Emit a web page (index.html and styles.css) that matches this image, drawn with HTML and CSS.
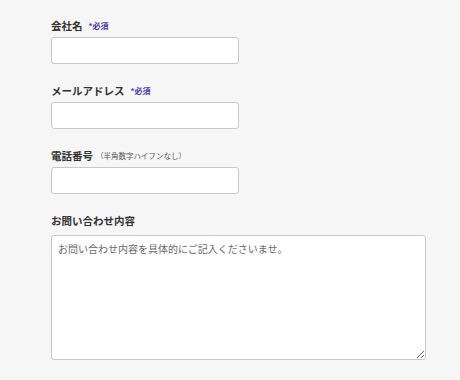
FILE: index.html
```html
<!DOCTYPE html>
<html lang="ja">
<head>
  <meta charset="UTF-8">
  <meta name="viewport" content="width=device-width, initial-scale=1.0">
  <title>お問い合わせ</title>
  <link rel="stylesheet" href="styles.css">
</head>
<body>
  <main>
    <form class="contact-form">
      <div class="field">
        <label for="company">会社名<span class="required">*必須</span></label>
        <input type="text" id="company" class="text-input">
      </div>
      <div class="field">
        <label for="email">メールアドレス<span class="required">*必須</span></label>
        <input type="email" id="email" class="text-input">
      </div>
      <div class="field">
        <label for="tel">電話番号<span class="hint">（半角数字ハイフンなし）</span></label>
        <input type="tel" id="tel" class="text-input">
      </div>
      <div class="field field-message">
        <label for="message">お問い合わせ内容</label>
        <textarea id="message" class="text-area" placeholder="お問い合わせ内容を具体的にご記入くださいませ。"></textarea>
      </div>
    </form>
  </main>
</body>
</html>
```

FILE: styles.css
```css
body {
  font-family: "Noto Sans CJK JP", "Noto Sans", sans-serif;
  margin: 0;
  padding: 0;
  background-color: #f6f6f6;
  color: #333;
}

main {
  padding: 18px 0 0 51px;
}

.field {
  display: flex;
  flex-direction: column;
  margin-bottom: 19px;
}

.field label {
  display: block;
  height: 16px;
  font-size: 10.5px;
  font-weight: bold;
  line-height: 16px;
  margin-bottom: 3px;
  color: #333;
}

.required {
  font-size: 8px;
  line-height: 1;
  color: #4a33a0;
  margin-left: 6px;
  vertical-align: 1px;
}

.hint {
  font-size: 7.5px;
  line-height: 1;
  font-weight: normal;
  color: #555;
  margin-left: 3px;
  vertical-align: 1px;
}

.text-input {
  box-sizing: border-box;
  width: 188px;
  height: 27px;
  border: 1px solid #c8c8c8;
  border-radius: 3px;
  background-color: #fff;
  margin: 0;
}

.field-message {
  margin-top: 1px;
}

.field-message label {
  margin-bottom: 6px;
}

.text-area {
  box-sizing: border-box;
  width: 375px;
  height: 125px;
  border: 1px solid #c8c8c8;
  border-radius: 3px;
  background-color: #fff;
  padding: 5px 6px;
  margin: 0;
  font-family: "Noto Sans CJK JP", "Noto Sans", sans-serif;
  font-size: 10px;
  line-height: 16px;
}

.text-area::placeholder {
  color: #6a6a6a;
}
```
